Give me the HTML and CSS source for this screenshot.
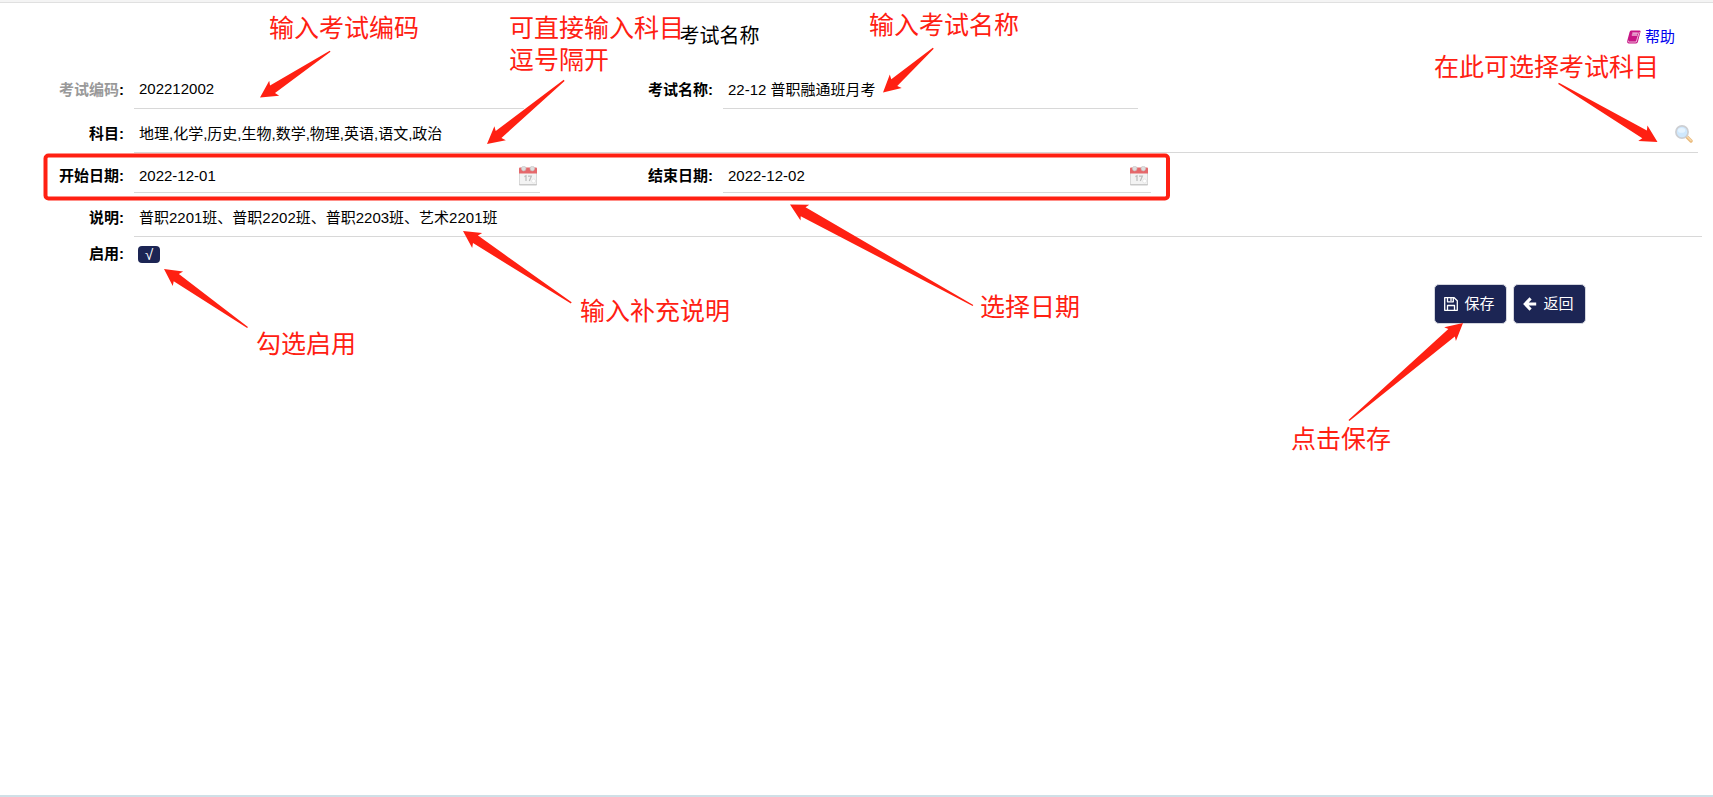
FILE: index.html
```html
<!DOCTYPE html>
<html lang="zh-CN">
<head>
<meta charset="utf-8">
<title>考试名称</title>
<link rel="stylesheet" href="styles.css">
</head>
<body>
<header class="header">
  <h1 class="title">考试名称</h1>
  <a class="help" href="#help">
    <svg class="book" viewBox="0 0 14 14" aria-hidden="true">
      <path d="M4 0.5H12.6Q13.8 0.7 13.5 1.8L11 11.6Q10.6 13.4 9 13.5H1.8Q-0.2 13.2 0.2 11L2.6 2Q3 .6 4 .5Z" fill="#c71585"/>
      <path d="M5.3 3.1H10.8M4.8 5H10.3" stroke="#fff" stroke-width="1"/>
      <path d="M1.3 10.6Q.9 12 2.2 12H9.2L12.3 2" fill="none" stroke="#fff" stroke-width=".7"/>
    </svg>
    <span>帮助</span>
  </a>
</header>

<form class="form">
  <div class="row row-pair">
    <label class="label" for="code"><span class="muted">考试编码</span>:</label>
    <input class="field field-code" id="code" type="text" value="202212002">
    <label class="label" for="name">考试名称:</label>
    <input class="field field-name" id="name" type="text" value="22-12 普职融通班月考">
  </div>

  <div class="row row-subject">
    <label class="label" for="subject">科目:</label>
    <div class="field-wrap">
      <input class="field" id="subject" type="text" value="地理,化学,历史,生物,数学,物理,英语,语文,政治">
      <button class="icon-btn" type="button" aria-label="选择科目">
        <svg viewBox="0 0 18 18" aria-hidden="true">
          <path d="M11 11L16 16" stroke="#e9b97a" stroke-width="3.4" stroke-linecap="round"/>
          <path d="M11.3 10.8L16 15.5" stroke="#f8d9ab" stroke-width="1.4" stroke-linecap="round"/>
          <circle cx="7" cy="7" r="6.1" fill="#cfe8fd" stroke="#cdcfd3" stroke-width="1.7"/>
          <ellipse cx="6.6" cy="5.4" rx="3.6" ry="2.4" fill="#e6f4ff"/>
        </svg>
      </button>
    </div>
  </div>

  <div class="row row-pair row-date">
    <label class="label" for="start">开始日期:</label>
    <div class="field-wrap">
      <input class="field" id="start" type="text" value="2022-12-01">
      <button class="icon-btn" type="button" aria-label="选择开始日期">
        <svg viewBox="0 0 18 20" aria-hidden="true"><use href="#calendar"/></svg>
      </button>
    </div>
    <label class="label" for="end">结束日期:</label>
    <div class="field-wrap">
      <input class="field" id="end" type="text" value="2022-12-02">
      <button class="icon-btn" type="button" aria-label="选择结束日期">
        <svg viewBox="0 0 18 20" aria-hidden="true"><use href="#calendar"/></svg>
      </button>
    </div>
  </div>

  <div class="row row-note">
    <label class="label" for="note">说明:</label>
    <input class="field" id="note" type="text" value="普职2201班、普职2202班、普职2203班、艺术2201班">
  </div>

  <div class="row row-enable">
    <label class="label" for="enable">启用:</label>
    <input class="check" id="enable" type="checkbox" checked>
  </div>

  <div class="actions">
    <button class="btn" type="submit">
      <svg viewBox="0 0 14 14" aria-hidden="true">
        <path d="M.7 .7H10.2L13.3 3.8V13.3H.7ZM3.5 .7V4.8H9.3V.7M7 1V4M3.5 13V8.5H10.5V13" fill="none" stroke="#fff" stroke-width="1.3" stroke-linejoin="round"/>
      </svg>
      <span>保存</span>
    </button>
    <button class="btn" type="button">
      <svg viewBox="0 0 14 14" aria-hidden="true">
        <path d="M7.6 1.4L2.2 7L7.6 12.6M2.8 7H13.2" fill="none" stroke="#fff" stroke-width="3"/>
      </svg>
      <span>返回</span>
    </button>
  </div>
</form>

<div class="notes">
  <svg class="arrows" aria-hidden="true">
    <defs>
      <g id="calendar">
        <rect x="0" y="2" width="18" height="17.6" rx="1" fill="#c9c9c9"/>
        <rect x="0.6" y="7" width="16.8" height="11" fill="#f3f3f3"/>
        <path d="M0 7.6V2.6Q0 1.6 1 1.6H17Q18 1.6 18 2.6V7.6Z" fill="#e5686b"/>
        <circle cx="4.7" cy="2.6" r="2.3" fill="#dedede" stroke="#c4c4c4" stroke-width=".6"/>
        <circle cx="13.3" cy="2.6" r="2.3" fill="#dedede" stroke="#c4c4c4" stroke-width=".6"/>
        <path d="M5.4 10.6L7 9.8V15M9 10.1H12.4L10.3 15" fill="none" stroke="#bdbdbd" stroke-width="1.2"/>
        <circle cx="14.6" cy="15" r="2" fill="#fff" stroke="#dcdcdc" stroke-width=".6"/>
      </g>
    </defs>
    <g fill="#ff2012">
      <path transform="translate(260 97.5) rotate(-33.4)" d="M0 0L17-9L15-4.5L84-.7V.7L15 4.5L17 9Z"/>
      <path transform="translate(487 144) rotate(-39.5)" d="M0 0L17-9L15-4.5L100-.7V.7L15 4.5L17 9Z"/>
      <path transform="translate(883 92.5) rotate(-41.4)" d="M0 0L17-9L15-4.5L67-.7V.7L15 4.5L17 9Z"/>
      <path transform="translate(1657.5 142) rotate(210.6)" d="M0 0L17-9L15-4.5L115-.7V.7L15 4.5L17 9Z"/>
      <path transform="translate(164 269) rotate(35)" d="M0 0L17-9L15-4.5L102-.7V.7L15 4.5L17 9Z"/>
      <path transform="translate(463 231) rotate(33.6)" d="M0 0L17-9L15-4.5L130-.7V.7L15 4.5L17 9Z"/>
      <path transform="translate(790 204.5) rotate(28.9)" d="M0 0L17-9L15-5L209-.7V.7L15 5L17 9Z"/>
      <path transform="translate(1463 323) rotate(139.5)" d="M0 0L17-9L15-5L150-.7V.7L15 5L17 9Z"/>
    </g>
    <rect x="45.5" y="155.5" width="1122.500" height="43" rx="3" fill="none" stroke="#ff2012" stroke-width="4"/>
  </svg>
  <p class="note note-code">输入考试编码</p>
  <p class="note note-subject">可直接输入科目<br>逗号隔开</p>
  <p class="note note-name">输入考试名称</p>
  <p class="note note-pick">在此可选择考试科目</p>
  <p class="note note-enable">勾选启用</p>
  <p class="note note-desc">输入补充说明</p>
  <p class="note note-date">选择日期</p>
  <p class="note note-save">点击保存</p>
</div>
</body>
</html>
```
FILE: styles.css
```css
* {
  box-sizing: border-box;
}

body {
  margin: 0;
  min-height: 100vh;
  position: relative;
  overflow: hidden;
  background: #fff;
  border-top: 2px solid #f4f4f4;
  border-bottom: 2px solid #cfe0e7;
  color: #000;
  font: 15px/20px "Liberation Sans", "Noto Sans CJK SC", sans-serif;
}

input,
button {
  font: inherit;
  color: inherit;
}

.header {
  display: flex;
  align-items: center;
  height: 69px;
  padding: 0 38px 2px 0;
  border-top: 1px solid #e0e0e0;
}

.title {
  width: 84vw;
  margin: 0;
  font-size: 20px;
  font-weight: 400;
  line-height: 28px;
  text-align: center;
}

.help {
  display: flex;
  align-items: center;
  gap: 4px;
  margin-left: auto;
  padding-top: 2px;
  color: #0000ee;
  text-decoration: none;
}

.book {
  width: 14px;
  height: 14px;
}

.form {
  display: flex;
  flex-direction: column;
  gap: 6px;
}

.row {
  display: grid;
  grid-template-columns: 124px 1fr;
  column-gap: 10px;
  align-items: center;
  height: 38px;
}

.row-pair {
  grid-template-columns: 124px 406fr 163fr 428fr 552fr;
}

.row-subject {
  padding-right: 15px;
}

.row-date {
  height: 34px;
}

.row-note {
  padding-right: 11px;
}

.row-enable {
  height: 34px;
  margin-top: -6px;
}

.label {
  font-weight: 700;
  text-align: right;
}

.muted {
  color: #999;
}

.field {
  width: 100%;
  height: 100%;
  min-width: 0;
  padding: 0 5px 3px;
  border: 0;
  border-bottom: 1px solid #d8d8d8;
  background: transparent;
  outline: 0;
}

.row-date .field {
  padding-bottom: 0;
}

.field-code {
  width: 96%;
}

.field-name {
  width: 97%;
}

.field-wrap {
  display: flex;
  align-items: center;
  height: 100%;
  border-bottom: 1px solid #d8d8d8;
}

.field-wrap .field {
  flex: 1;
  border-bottom: 0;
}

.icon-btn {
  display: flex;
  padding: 0;
  margin-right: 3px;
  border: 0;
  background: none;
}

.row-subject .icon-btn {
  margin-right: 5px;
}

.icon-btn svg {
  width: 18px;
}

.check {
  appearance: none;
  display: grid;
  place-items: center;
  width: 22px;
  height: 17px;
  margin: 0 0 0 4px;
  border-radius: 4px;
  background: #1c2554;
  color: #fff;
}

.check:checked::before {
  content: "√";
  line-height: 17px;
}

.actions {
  display: flex;
  justify-content: flex-end;
  gap: 6px;
  margin-top: 7px;
  padding-right: 127px;
}

.btn {
  display: flex;
  align-items: center;
  justify-content: center;
  gap: 6px;
  width: 73px;
  height: 40px;
  padding: 0 2px 0 0;
  border: 1px solid #d4d6de;
  border-radius: 5px;
  background: #1c2554;
  color: #fff;
}

.btn svg {
  width: 14px;
  height: 14px;
}

/* Callouts drawn over the form */
.notes {
  position: absolute;
  inset: -2px 0 0;
  pointer-events: none;
}

.arrows {
  position: absolute;
  width: 100%;
  height: 100%;
}

.note {
  position: absolute;
  margin: 0;
  color: #ff2012;
  font-size: 25px;
  line-height: 32px;
  white-space: nowrap;
}

.note-code { left: 269px; top: 12px; }
.note-subject { left: 509px; top: 12px; }
.note-name { left: 869px; top: 9px; }
.note-pick { left: 1434px; top: 51px; }
.note-enable { left: 256px; top: 328px; }
.note-desc { left: 580px; top: 295px; }
.note-date { left: 980px; top: 291px; }
.note-save { left: 1291px; top: 423px; }
```
